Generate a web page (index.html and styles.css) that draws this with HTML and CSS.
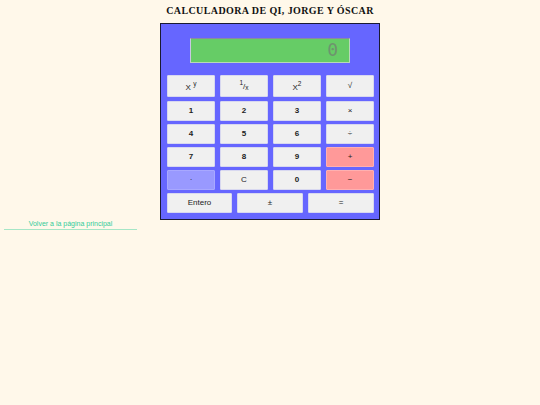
FILE: index.html
```html
<!DOCTYPE html>
<html lang="es">
<head>
<meta charset="utf-8">
<title>Calculadora</title>
<link rel="stylesheet" href="styles.css">
</head>
<body>
<h1 class="title">CALCULADORA DE QI, JORGE Y ÓSCAR</h1>
<div class="calc">
  <div class="display">0</div>
  <div class="keys">
    <button class="key top">X <sup>y</sup></button>
    <button class="key top"><sup>1</sup>/<sub>x</sub></button>
    <button class="key top">X<sup>2</sup></button>
    <button class="key top">√</button>
    <button class="key num">1</button>
    <button class="key num">2</button>
    <button class="key num">3</button>
    <button class="key">×</button>
    <button class="key num">4</button>
    <button class="key num">5</button>
    <button class="key num">6</button>
    <button class="key">÷</button>
    <button class="key num">7</button>
    <button class="key num">8</button>
    <button class="key num">9</button>
    <button class="key red">+</button>
    <button class="key blue">·</button>
    <button class="key">C</button>
    <button class="key num">0</button>
    <button class="key red">−</button>
  </div>
  <div class="bottom">
    <button class="key">Entero</button>
    <button class="key">±</button>
    <button class="key">=</button>
  </div>
</div>
<div class="back"><a href="#">Volver a la página principal</a></div>
</body>
</html>
```
FILE: styles.css
```css
html, body {
  margin: 0;
  padding: 0;
  background: #fff8ea;
}
body {
  font-family: "Liberation Sans", Arial, sans-serif;
}
.title {
  margin: 0;
  padding-top: 5px;
  height: 18px;
  text-align: center;
  font-family: "Liberation Serif", "Times New Roman", serif;
  font-size: 10px;
  font-weight: bold;
  letter-spacing: 0.4px;
  color: #111;
}
.calc {
  box-sizing: border-box;
  width: 220px;
  margin: 0 auto;
  background: #6666ff;
  border: 1.5px solid #1a1a33;
  padding: 14px 6px 6px 6px;
}
.display {
  box-sizing: border-box;
  width: 160px;
  height: 25px;
  margin: 0 auto 12px auto;
  background: #66cc66;
  border: 1px solid #b8d8b8;
  border-top-color: #8a8aa0;
  border-left-color: #c8c8e0;
  text-align: right;
  font-family: "DejaVu Sans Mono", monospace;
  font-size: 18px;
  line-height: 22px;
  color: #6e946e;
  padding-right: 11px;
}
.keys {
  display: grid;
  grid-template-columns: repeat(4, 48px);
  grid-template-rows: 23px repeat(4, 20px);
  column-gap: 5px;
  row-gap: 3px;
}
.key.top {
  height: 22px;
  align-self: start;
}
.bottom {
  display: grid;
  grid-template-columns: 65px 66px 66px;
  column-gap: 5px;
  margin-top: 3px;
  height: 20px;
}
.key {
  box-sizing: border-box;
  margin: 0;
  padding: 0;
  height: 20px;
  background: #f0f0f0;
  border: 1px solid #d8d8f0;
  border-radius: 1px;
  font-family: "Liberation Sans", Arial, sans-serif;
  font-size: 8px;
  color: #222;
  line-height: 1;
}
.key.num { font-weight: bold; }
.key.red { background: #ff9999; border-color: #ffb0b0; }
.key.blue { background: #9999ff; border-color: #a8a8ff; }
.key sup { font-size: 6.5px; vertical-align: 4px; }
.key sub { font-size: 6.5px; vertical-align: -1px; }
.back {
  width: 133px;
  margin: 0 0 0 4px;
  padding-top: 0;
  height: 9px;
  text-align: center;
  border-bottom: 1px solid #a6e6c6;
  font-size: 7px;
  line-height: 7px;
}
.back a {
  color: #33cc99;
  text-decoration: none;
}
```
